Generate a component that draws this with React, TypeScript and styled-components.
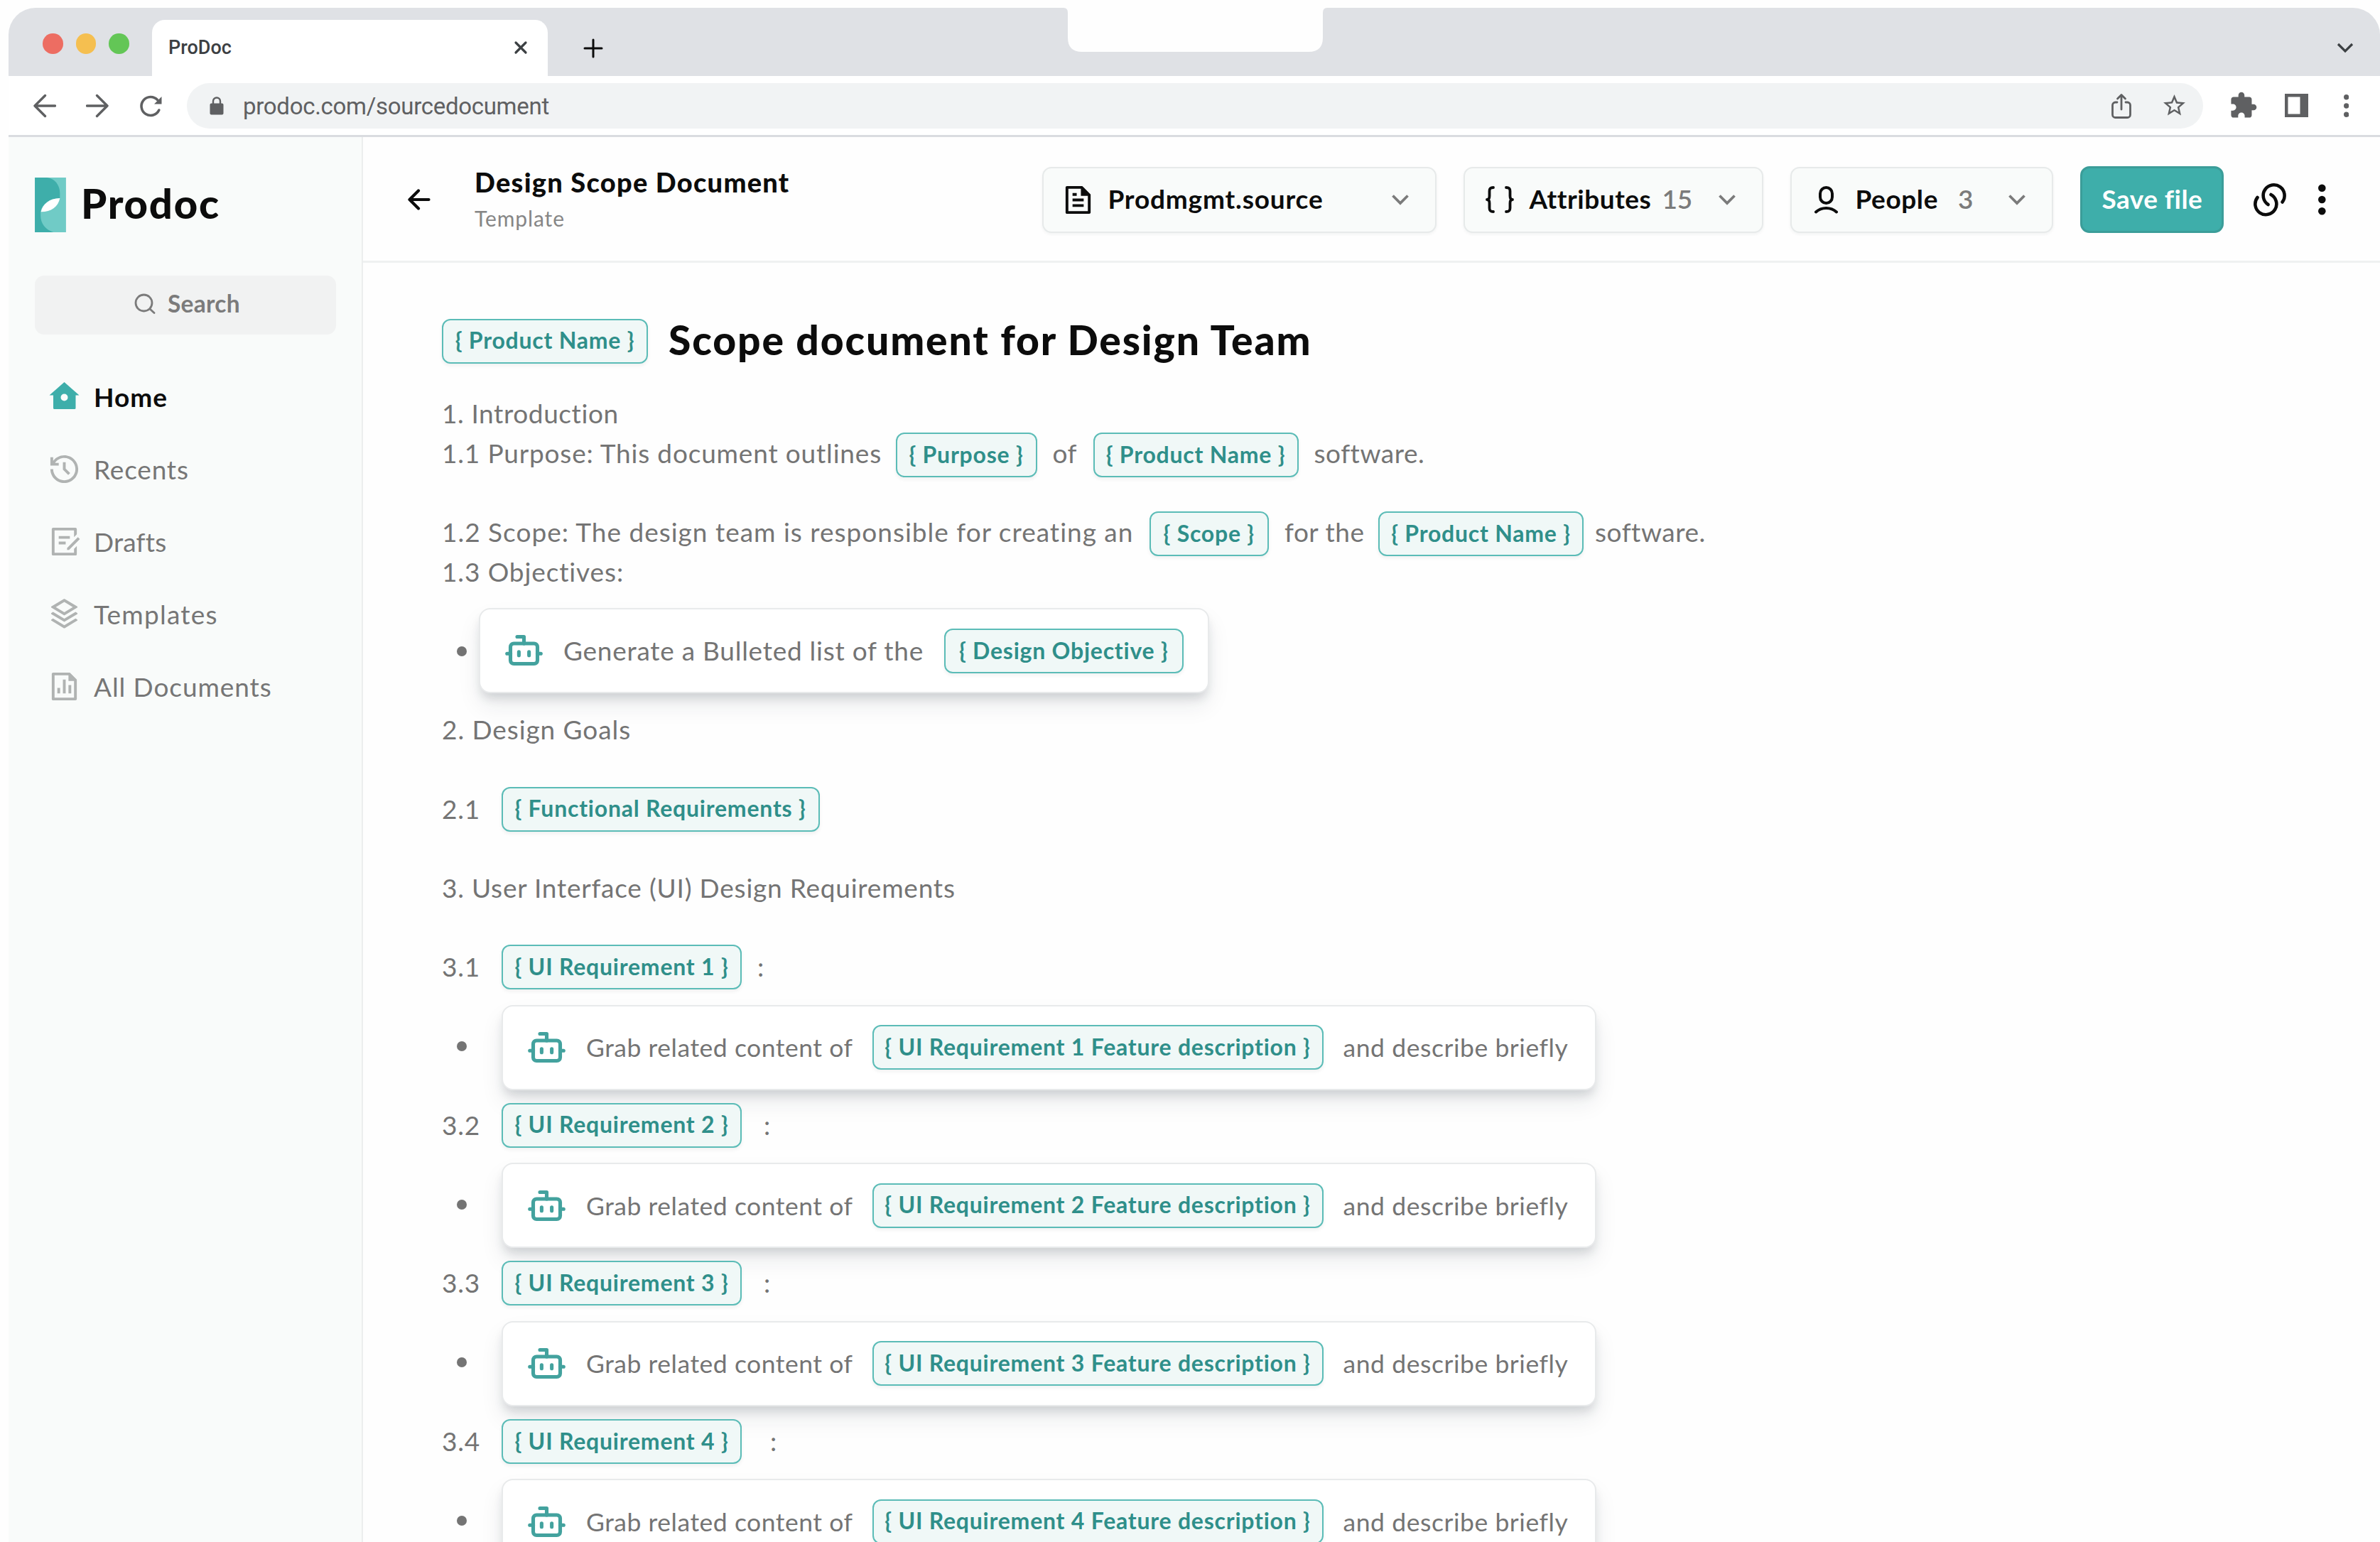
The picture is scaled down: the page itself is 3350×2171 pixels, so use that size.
import React from "react";
import styled, { createGlobalStyle } from "styled-components";
import { Bot } from "lucide-react";
import {
  RiDraftLine,
  RiFileChartLine,
  RiFileTextLine,
  RiHistoryLine,
  RiStackLine,
} from "react-icons/ri";
import { MdExtension, MdStarBorder } from "react-icons/md";

const GlobalStyle = createGlobalStyle`
  * { box-sizing: border-box; }
  html, body { margin: 0; background: #fff; }
  body { overflow: hidden; }
  svg { display: block; flex: none; }
`;

const Screen = styled.div`
  width: 3350px;
  height: 2171px;
  padding: 11px 0 0 12px;
  overflow: hidden;
  background: #fefefe;
  font-family: "Lato", "Open Sans", sans-serif;
  color: #0c0c0c;
`;

/* ---------- Browser chrome ---------- */

const TabStrip = styled.div`
  position: relative;
  display: flex;
  align-items: flex-end;
  height: 96px;
  padding-left: 48px;
  background: #dfe1e5;
  border-radius: 38px 38px 0 0;
`;

const Lights = styled.div`
  display: flex;
  gap: 18px;
  width: 154px;
  height: 60px;
`;

const Light = styled.span<{ $color: string }>`
  width: 28.5px;
  height: 28.5px;
  border-radius: 50%;
  background: ${(p) => p.$color};
`;

const Tab = styled.div`
  display: flex;
  align-items: center;
  justify-content: space-between;
  width: 557px;
  height: 79px;
  padding: 0 28px 2px 23px;
  border-radius: 18px 18px 0 0;
  background: #fff;
  color: #3c4043;
  font: 500 27px "Roboto", sans-serif;
`;

const NewTab = styled.div`
  padding: 0 0 25px 50px;
`;

const TabMenu = styled.div`
  margin-left: auto;
  padding: 0 37px 32px 0;
`;

const Notch = styled.svg`
  position: absolute;
  left: 1485px;
  top: -1px;
`;

const Toolbar = styled.div`
  display: flex;
  align-items: center;
  height: 86px;
  padding: 0 44px 0 35px;
  border-bottom: 3px solid #dadce0;
  background: #fff;
  color: #5f6062;
`;

const NavIcons = styled.div`
  display: flex;
  gap: 42px;
  width: 216px;
`;

const AddressBar = styled.div`
  display: flex;
  align-items: center;
  width: 2838px;
  height: 64px;
  padding: 0 22px 0 32px;
  border-radius: 32px;
  background: #f1f3f4;
`;

const Url = styled.span`
  flex: 1;
  margin: 2px 0 0 27px;
  font: 400 33px "Roboto", sans-serif;
  letter-spacing: -0.009em;
`;

const BarIcons = styled.div`
  display: flex;
  align-items: center;
  gap: 42px;
`;

const Extensions = styled.div`
  display: flex;
  align-items: center;
  flex: 1;
  justify-content: space-between;
  padding-left: 36px;
`;

const PanelSlot = styled.span`
  margin-right: 12px;
`;

/* ---------- App shell ---------- */

const Shell = styled.div`
  display: flex;
  height: 1978px;
`;

const Sidebar = styled.aside`
  flex: none;
  width: 499px;
  padding: 57px 36px 0 37px;
  border-right: 2px solid #eceeee;
  background: #f9fbfa;
`;

const Brand = styled.div`
  display: flex;
  align-items: center;
  gap: 21px;
  height: 77px;
`;

const BrandName = styled.span`
  margin-top: -6px;
  font-size: 58px;
  font-weight: 900;
  letter-spacing: 0.03em;
`;

const SearchBox = styled.div`
  display: flex;
  align-items: center;
  gap: 17px;
  height: 83px;
  margin-top: 61px;
  padding: 0 0 5px 140px;
  border-radius: 13px;
  background: #f1f2f2;
  color: #7b7b7b;
  font-size: 33.5px;
  font-weight: 700;
  letter-spacing: 0.008em;
`;

const Nav = styled.nav`
  margin-top: 36px;
`;

const NavItem = styled.div<{ $active?: boolean; $ls: number }>`
  display: flex;
  align-items: center;
  gap: 18px;
  height: 102px;
  padding-left: 18px;
  font-size: 37px;
  font-weight: ${(p) => (p.$active ? 700 : 400)};
  letter-spacing: ${(p) => p.$ls}em;
  color: ${(p) => (p.$active ? "#0c0c0c" : "#767676")};
  svg {
    color: ${(p) => (p.$active ? "#3eaeaa" : "#b0b3b2")};
  }
`;

const Main = styled.main`
  flex: 1;
  min-width: 0;
`;

/* ---------- Document header ---------- */

const Header = styled.header`
  display: flex;
  align-items: center;
  height: 177px;
  padding: 2px 76px 0 63px;
  border-bottom: 3px solid #eff1f1;
`;

const Titles = styled.div`
  display: flex;
  flex-direction: column;
  margin: 2px 0 0 62px;
`;

const DocName = styled.span`
  font-size: 38px;
  line-height: 51px;
  font-weight: 900;
  letter-spacing: 0.033em;
`;

const DocKind = styled.span`
  font-size: 30px;
  line-height: 51px;
  letter-spacing: 0.03em;
  color: #868686;
`;

const Actions = styled.div`
  display: flex;
  align-items: center;
  gap: 38px;
  margin-left: auto;
`;

const Dropdown = styled.div<{ $w: number; $pl: number; $gap: number; $pr: number }>`
  display: flex;
  align-items: center;
  width: ${(p) => p.$w}px;
  height: 93px;
  padding: 0 ${(p) => p.$pr}px 0 ${(p) => p.$pl}px;
  gap: ${(p) => p.$gap}px;
  border: 2px solid #e7eaea;
  border-radius: 13px;
  background: #f9fbfa;
  box-shadow: 0 2px 4px rgba(20, 30, 40, 0.05);
`;

const DropLabel = styled.span<{ $ls: number; $ml?: number }>`
  margin: -3px 0 0 ${(p) => p.$ml ?? 0}px;
  font-size: 37px;
  font-weight: 700;
  letter-spacing: ${(p) => p.$ls}em;
  white-space: nowrap;
`;

const Count = styled.span<{ $ml: number }>`
  flex: 1;
  margin: -3px 0 0 ${(p) => p.$ml}px;
  font-size: 37px;
  font-weight: 600;
  color: #7b7b7b;
`;

const Spacer = styled.span`
  flex: 1;
`;

const SaveButton = styled.button`
  width: 202px;
  height: 94px;
  padding: 0 0 3px;
  border: 3px solid #3b9d99;
  border-radius: 13px;
  background: #3eaeaa;
  color: #fff;
  font: 700 37px "Lato", sans-serif;
  letter-spacing: 0.012em;
  white-space: nowrap;
`;

const Tools = styled.div`
  display: flex;
  align-items: center;
  gap: 44px;
  margin-left: 3px;
`;

/* ---------- Document body ---------- */

const Doc = styled.article`
  padding: 74px 0 0 111px;
  color: #747474;
  font-size: 37px;
`;

const TitleRow = styled.div`
  display: flex;
  align-items: center;
  gap: 29px;
  height: 72px;
  margin-bottom: 38px;
`;

const Heading = styled.h1`
  margin: -4px 0 0;
  font-size: 57px;
  font-weight: 900;
  letter-spacing: 0.033em;
  color: #0c0c0c;
  white-space: nowrap;
`;

const LINE = 55.65;

const Line = styled.div`
  display: flex;
  align-items: center;
  height: ${LINE}px;
`;

const Blank = styled.div`
  height: ${LINE}px;
`;

const Seg = styled.span<{ $w?: number; $pl?: number; $ls?: number; $size?: number }>`
  flex: none;
  width: ${(p) => (p.$w ? `${p.$w}px` : "auto")};
  padding-left: ${(p) => p.$pl ?? 0}px;
  font-size: ${(p) => p.$size ?? 37}px;
  letter-spacing: ${(p) => p.$ls ?? 0.02}em;
  white-space: nowrap;
`;

const Chip = styled.span<{ $w: number; $drop?: number }>`
  display: flex;
  align-items: center;
  justify-content: center;
  flex: none;
  width: ${(p) => p.$w}px;
  height: 63px;
  margin-top: ${(p) => p.$drop ?? 0}px;
  padding-bottom: 3px;
  border: 2.5px solid #5bbcb7;
  border-radius: 12px;
  background: #f0f8f7;
  color: #2f8f8a;
  font-size: 32px;
  font-weight: 700;
  letter-spacing: 0.024em;
  white-space: nowrap;
  box-shadow: 0 3px 5px rgba(20, 30, 40, 0.06);
`;

const BulletRow = styled.div`
  display: flex;
  align-items: center;
  height: ${LINE * 3}px;
  padding-left: 20.5px;
`;

const Dot = styled.span`
  flex: none;
  width: 14px;
  height: 14px;
  margin-top: 2px;
  border-radius: 50%;
  background: #747474;
`;

const Card = styled.div<{ $w: number; $ml: number; $drop?: number }>`
  display: flex;
  align-items: center;
  flex: none;
  width: ${(p) => p.$w}px;
  height: 120px;
  margin-top: ${(p) => p.$drop ?? 0}px;
  margin-left: ${(p) => p.$ml}px;
  padding-left: 33px;
  border: 2px solid #e8eaeb;
  border-radius: 16px;
  background: #fff;
  box-shadow: 0 10px 14px -3px rgba(30, 38, 52, 0.15), 0 18px 32px rgba(30, 38, 52, 0.08);
`;

const BotIcon = styled(Bot)`
  color: #43a29e;
  margin-right: 27px;
`;

/* ---------- Icons ---------- */

type StrokeProps = { w: number; h: number; sw?: number; children: React.ReactNode };

function Stroke({ w, h, sw = 4, children }: StrokeProps) {
  return (
    <svg
      width={w}
      height={h}
      viewBox={`0 0 ${w} ${h}`}
      fill="none"
      stroke="currentColor"
      strokeWidth={sw}
      strokeLinecap="round"
      strokeLinejoin="round"
    >
      {children}
    </svg>
  );
}

const Chevron = () => (
  <svg width="26" height="18" viewBox="0 0 26 18" fill="none" stroke="#7b7b7b" strokeWidth="3.8">
    <path d="M2.5 3.5 13 14 23.5 3.5" />
  </svg>
);

const LogoMark = () => (
  <svg width="44" height="77" viewBox="0 0 43.5 76.5">
    <path d="M0 0H43.5V76.5H0Z" fill="#70cbc6" />
    <path
      d="M0 0H17C28 1 35 11 35 22V28.7C20 29 10 37 8 47.7V53C8 65 15 73 26 76.5H0Z"
      fill="#3eaeaa"
    />
    <path d="M35 28.7C20.5 29 10.5 37 8.5 47.9C22.5 48 32.5 41 35 28.7Z" fill="#fff" />
  </svg>
);

const HomeIcon = () => (
  <svg width="47" height="47" viewBox="0 0 47 47" fill="currentColor">
    <path
      fillRule="evenodd"
      d="M23.5 3 44.5 21.5H39.5V39.5A1.5 1.5 0 0 1 38 41H9.5A1.5 1.5 0 0 1 8 39.5V21.5H2.5ZM23.5 19.5A5 5 0 1 0 23.5 29.5A5 5 0 1 0 23.5 19.5Z"
    />
  </svg>
);

const Dots = ({ r, gap, size }: { r: number; gap: number; size: number }) => (
  <svg width={r * 2} height={size} viewBox={`0 0 ${r * 2} ${size}`} fill="currentColor">
    {[-1, 0, 1].map((i) => (
      <circle key={i} cx={r} cy={size / 2 + i * gap} r={r} />
    ))}
  </svg>
);

/* ---------- Content ---------- */

const navItems = [
  { label: "Recents", icon: RiHistoryLine, ls: 0.022 },
  { label: "Drafts", icon: RiDraftLine, ls: 0.005 },
  { label: "Templates", icon: RiStackLine, ls: 0.033 },
  { label: "All Documents", icon: RiFileChartLine, ls: 0.025 },
];

const requirements = [
  { n: 1, colon: 22 },
  { n: 2, colon: 31 },
  { n: 3, colon: 31 },
  { n: 4, colon: 40 },
];

export default function App() {
  return (
    <Screen>
      <GlobalStyle />
      <TabStrip>
        <Lights>
          <Light $color="#ed6d62" />
          <Light $color="#f5bf50" />
          <Light $color="#63c656" />
        </Lights>
        <Tab>
          ProDoc
          <Stroke w={20} h={20} sw={3.2}>
            <path d="M3 3 17 17M17 3 3 17" />
          </Stroke>
        </Tab>
        <NewTab>
          <Stroke w={28} h={28} sw={3}>
            <path d="M14 2V26M2 14H26" />
          </Stroke>
        </NewTab>
        <TabMenu>
          <svg width="24" height="16" viewBox="0 0 24 16" fill="none" stroke="#3c4043" strokeWidth="3.2">
            <path d="M2 3 12 13 22 3" />
          </svg>
        </TabMenu>
        <Notch width="371" height="63" viewBox="0 0 371 63">
          <path
            d="M0 0V1Q6 1 6 8V43Q6 63 26 63H345Q365 63 365 43V8Q365 1 371 1V0Z"
            fill="#fefefe"
          />
        </Notch>
      </TabStrip>

      <Toolbar>
        <NavIcons>
          <Stroke w={32} h={34} sw={3.4}>
            <path d="M30.5 17H2.5M16.5 2.5 2 17 16.5 31.5" />
          </Stroke>
          <Stroke w={32} h={34} sw={3.4}>
            <path d="M1.5 17H29.5M15.5 2.5 30 17 15.5 31.5" />
          </Stroke>
          <Stroke w={34} h={34} sw={3.6}>
            <path d="M28.8 23A13 13 0 1 1 26.500 8.500" />
            <path d="M32.5 4V14.500H22Z" fill="currentColor" stroke="none" />
          </Stroke>
        </NavIcons>
        <AddressBar>
          <svg width="20" height="26" viewBox="0 0 20 26">
            <rect x="0.5" y="9.5" width="19" height="16" rx="2" fill="#5f6062" />
            <path d="M5 10V6.5A5 5 0 0 1 15 6.5V10" fill="none" stroke="#5f6062" strokeWidth="2.4" />
          </svg>
          <Url>prodoc.com/sourcedocument</Url>
          <BarIcons>
            <Stroke w={28} h={36} sw={2.8}>
              <path d="M8 13H5.5A4 4 0 0 0 1.5 17V30.5A4 4 0 0 0 5.5 34.5H22.5A4 4 0 0 0 26.5 30.5V17A4 4 0 0 0 22.5 13H20M14 23V3M8.5 8 14 2.5 19.5 8" />
            </Stroke>
            <MdStarBorder size={37} />
          </BarIcons>
        </AddressBar>
        <Extensions>
          <MdExtension size={41} />
          <PanelSlot>
            <svg width="33" height="33" viewBox="0 0 33 33">
              <path fill="#5f6062" fillRule="evenodd" d="M0 0H33V33H0ZM4.5 4.5V28.5H21.5V4.5Z" />
            </svg>
          </PanelSlot>
          <Dots r={3.7} gap={12.2} size={34} />
        </Extensions>
      </Toolbar>

      <Shell>
        <Sidebar>
          <Brand>
            <LogoMark />
            <BrandName>Prodoc</BrandName>
          </Brand>
          <SearchBox>
            <Stroke w={30} h={30} sw={2.8}>
              <circle cx="13.5" cy="14.5" r="11.5" />
              <path d="M22 23 28 28.5" />
            </Stroke>
            Search
          </SearchBox>
          <Nav>
            <NavItem $active $ls={0.028}>
              <HomeIcon />
              Home
            </NavItem>
            {navItems.map(({ label, icon: Icon, ls }) => (
              <NavItem key={label} $ls={ls}>
                <Icon size={47} />
                {label}
              </NavItem>
            ))}
          </Nav>
        </Sidebar>

        <Main>
          <Header>
            <Stroke w={32} h={32} sw={4.2}>
              <path d="M29.5 16H3.5M15 3.5 2.5 16 15 28.5" />
            </Stroke>
            <Titles>
              <DocName>Design Scope Document</DocName>
              <DocKind>Template</DocKind>
            </Titles>
            <Actions>
              <Dropdown $w={555} $pl={25} $gap={18} $pr={36}>
                <RiFileTextLine size={47} />
                <DropLabel $ls={0.022}>Prodmgmt.source</DropLabel>
                <Spacer />
                <Chevron />
              </Dropdown>
              <Dropdown $w={422} $pl={29} $gap={0} $pr={36}>
                <Stroke w={40} h={40} sw={3.8}>
                  <path d="M11 3C7.5 3 5.5 4 5.5 8V15C5.5 18 4.5 20 2 20C4.5 20 5.5 22 5.5 25V32C5.5 36 7.5 37 11 37" />
                  <path d="M29 3C32.5 3 34.5 4 34.5 8V15C34.5 18 35.5 20 38 20C35.5 20 34.5 22 34.5 25V32C34.5 36 32.5 37 29 37" />
                </Stroke>
                <DropLabel $ls={0.014} $ml={21}>
                  Attributes
                </DropLabel>
                <Count $ml={15}>15</Count>
                <Chevron />
              </Dropdown>
              <Dropdown $w={370} $pl={31} $gap={22} $pr={36}>
                <Stroke w={36} h={40} sw={4}>
                  <rect x="9" y="3" width="17" height="22" rx="8.5" />
                  <path d="M3 37.5C11 30 24 30 32 37.5" />
                </Stroke>
                <DropLabel $ls={0.016}>People</DropLabel>
                <Count $ml={6}>3</Count>
                <Chevron />
              </Dropdown>
              <SaveButton>Save file</SaveButton>
              <Tools>
                <Stroke w={48} h={48} sw={4.6}>
                  <path d="M21.6 31A15 15 0 1 1 41.5 27.5" />
                  <path d="M25.5 17A15 15 0 1 1 6.5 21" />
                </Stroke>
                <Dots r={5.3} gap={16.3} size={46} />
              </Tools>
            </Actions>
          </Header>

          <Doc>
            <TitleRow>
              <Chip $w={290}>{"{ Product Name }"}</Chip>
              <Heading>Scope document for Design Team</Heading>
            </TitleRow>
            <Line>
              <Seg $ls={0.016}>1. Introduction</Seg>
            </Line>
            <Line>
              <Seg $w={638.5} $ls={0.022}>
                1.1 Purpose: This document outlines
              </Seg>
              <Chip $w={199} $drop={7}>
                {"{ Purpose }"}
              </Chip>
              <Seg $w={79} $pl={22} $ls={0.01}>
                of
              </Seg>
              <Chip $w={289} $drop={7}>
                {"{ Product Name }"}
              </Chip>
              <Seg $pl={22} $ls={0.014}>
                software.
              </Seg>
            </Line>
            <Blank />
            <Line>
              <Seg $w={995.5} $ls={0.027}>
                1.2 Scope: The design team is responsible for creating an
              </Seg>
              <Chip $w={168.5} $drop={6}>
                {"{ Scope }"}
              </Chip>
              <Seg $w={154} $pl={22} $ls={0.014}>
                for the
              </Seg>
              <Chip $w={289} $drop={6}>
                {"{ Product Name }"}
              </Chip>
              <Seg $pl={16} $ls={0.014}>
                software.
              </Seg>
            </Line>
            <Line>
              <Seg $ls={0.024}>1.3 Objectives:</Seg>
            </Line>
            <BulletRow>
              <Dot />
              <Card $w={1028} $ml={17.5}>
                <BotIcon size={57} strokeWidth={2.15} />
                <Seg $w={536} $ls={0.02}>
                  Generate a Bulleted list of the
                </Seg>
                <Chip $w={336.5} $drop={2}>
                  {"{ Design Objective }"}
                </Chip>
              </Card>
            </BulletRow>
            <Line>
              <Seg $ls={0.025}>2. Design Goals</Seg>
            </Line>
            <Blank />
            <Line>
              <Seg $w={83.5}>2.1</Seg>
              <Chip $w={448} $drop={2}>
                {"{ Functional Requirements }"}
              </Chip>
            </Line>
            <Blank />
            <Line>
              <Seg $ls={0.021}>3. User Interface (UI) Design Requirements</Seg>
            </Line>
            <Blank />
            {requirements.map(({ n, colon }) => (
              <React.Fragment key={n}>
                <Line>
                  <Seg $w={84}>3.{n}</Seg>
                  <Chip $w={338} $drop={2}>{`{ UI Requirement ${n} }`}</Chip>
                  <Seg $pl={colon}>:</Seg>
                </Line>
                <BulletRow>
                  <Dot />
                  <Card $w={1541} $ml={49.5} $drop={5}>
                    <BotIcon size={57} strokeWidth={2.15} />
                    <Seg $w={402.5} $ls={0.015} $size={35.5}>
                      Grab related content of
                    </Seg>
                    <Chip $w={635}>{`{ UI Requirement ${n} Feature description }`}</Chip>
                    <Seg $pl={28} $ls={0.016} $size={35.5}>
                      and describe briefly
                    </Seg>
                  </Card>
                </BulletRow>
              </React.Fragment>
            ))}
          </Doc>
        </Main>
      </Shell>
    </Screen>
  );
}
